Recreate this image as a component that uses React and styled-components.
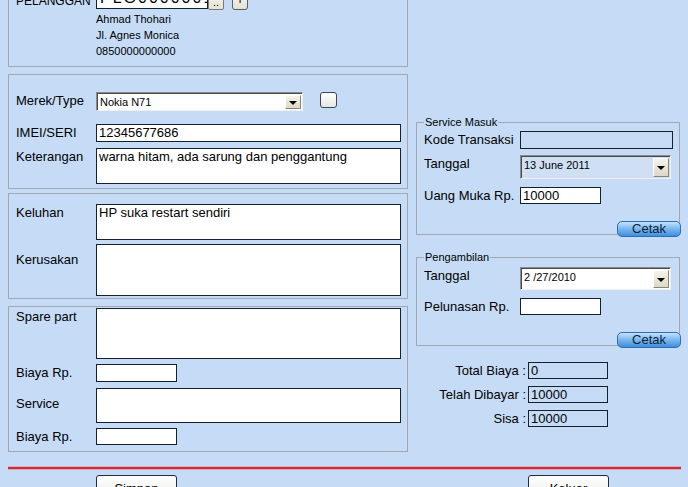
import styled, { createGlobalStyle } from "styled-components";

const GlobalStyle = createGlobalStyle`
  html, body {
    margin: 0;
    padding: 0;
    background: #c6dcf6;
    overflow: hidden;
  }
  body {
    font-family: "Liberation Sans", Arial, sans-serif;
    font-size: 13px;
    color: #000;
  }
  * {
    box-sizing: border-box;
  }
`;

export default function App() {
  return (
    <>
      <GlobalStyle />
      <Page>
        <Inner>
          <Columns>
            <LeftCol>
              <Panel $pt={8} $pb={7}>
                <Row>
                  <Label $drop={3} $small>PELANGGAN</Label>
                  <CodeBox>PLG0000001</CodeBox>
                  <DotsButton>..</DotsButton>
                  <PlusButton>+</PlusButton>
                </Row>
                <Info>
                  <div>Ahmad Thohari</div>
                  <div>Jl. Agnes Monica</div>
                  <div>0850000000000</div>
                </Info>
              </Panel>

              <Panel $mt={7} $pt={17} $pb={4}>
                <Row>
                  <Label>Merek/Type</Label>
                  <Combo $w={207} $h={19}>
                    <ComboText>Nokia N71</ComboText>
                    <ArrowButton>
                      <Arrow />
                    </ArrowButton>
                  </Combo>
                  <CheckButton />
                </Row>
                <Row $mt={13}>
                  <Label>IMEI/SERI</Label>
                  <Box $h={18}>12345677686</Box>
                </Row>
                <Row $mt={6}>
                  <Label>Keterangan</Label>
                  <Box $h={36}>warna hitam, ada sarung dan penggantung</Box>
                </Row>
              </Panel>

              <Panel $mt={4} $pt={10} $pb={2}>
                <Row>
                  <Label>Keluhan</Label>
                  <Box $h={36}>HP suka restart sendiri</Box>
                </Row>
                <Row $mt={4}>
                  <Label $drop={7}>Kerusakan</Label>
                  <Box $h={52} />
                </Row>
              </Panel>

              <Panel $mt={7} $pt={1} $pb={5}>
                <Row>
                  <Label>Spare part</Label>
                  <Box $h={51} />
                </Row>
                <Row $mt={5}>
                  <Label>Biaya Rp.</Label>
                  <Box $h={18} $w={81} />
                </Row>
                <Row $mt={6}>
                  <Label $drop={7}>Service</Label>
                  <Box $h={35} />
                </Row>
                <Row $mt={5}>
                  <Label>Biaya Rp.</Label>
                  <Box $h={17} $w={81} />
                </Row>
              </Panel>
            </LeftCol>

            <RightCol>
              <Group>
                <Legend>Service Masuk</Legend>
                <GroupBody $pt={2}>
                  <Row>
                    <Label $w={96}>Kode Transaksi</Label>
                    <Box $h={18} $w={153} $tinted />
                  </Row>
                  <Row $mt={6}>
                    <Label $w={96}>Tanggal</Label>
                    <Combo $w={151} $h={24} $tinted>
                      <ComboText>13 June 2011</ComboText>
                      <ArrowButton>
                        <Arrow />
                      </ArrowButton>
                    </Combo>
                  </Row>
                  <Row $mt={8}>
                    <Label $w={96}>Uang Muka Rp.</Label>
                    <Box $h={17} $w={81}>10000</Box>
                  </Row>
                  <BlueButton>Cetak</BlueButton>
                </GroupBody>
              </Group>

              <Group $mt={15}>
                <Legend>Pengambilan</Legend>
                <GroupBody $pt={3}>
                  <Row>
                    <Label $w={96}>Tanggal</Label>
                    <Combo $w={151} $h={23}>
                      <ComboText>2 /27/2010</ComboText>
                      <ArrowButton>
                        <Arrow />
                      </ArrowButton>
                    </Combo>
                  </Row>
                  <Row $mt={8}>
                    <Label $w={96}>Pelunasan Rp.</Label>
                    <Box $h={17} $w={81} />
                  </Row>
                  <BlueButton>Cetak</BlueButton>
                </GroupBody>
              </Group>

              <Totals>
                <TotalRow>
                  <TotalLabel>Total Biaya :</TotalLabel>
                  <Box $h={17} $w={80} $tinted>0</Box>
                </TotalRow>
                <TotalRow>
                  <TotalLabel>Telah Dibayar :</TotalLabel>
                  <Box $h={17} $w={80} $tinted>10000</Box>
                </TotalRow>
                <TotalRow>
                  <TotalLabel>Sisa :</TotalLabel>
                  <Box $h={17} $w={80} $tinted>10000</Box>
                </TotalRow>
              </Totals>
            </RightCol>
          </Columns>

          <Divider />

          <Footer>
            <FooterCell $pl={88}>
              <PlainButton>Simpan</PlainButton>
            </FooterCell>
            <FooterCell $pl={112}>
              <PlainButton>Keluar</PlainButton>
            </FooterCell>
          </Footer>
        </Inner>
      </Page>
    </>
  );
}

const Page = styled.div`
  width: 688px;
  height: 487px;
  overflow: hidden;
  padding-left: 8px;
`;
const Inner = styled.div`
  margin-top: -20px;
`;
const Columns = styled.div`
  display: grid;
  grid-template-columns: 400px 264px;
  column-gap: 8px;
  align-items: start;
`;
const LeftCol = styled.div`
  display: flex;
  flex-direction: column;
`;
const RightCol = styled.div`
  display: flex;
  flex-direction: column;
  padding-top: 135px;
`;
const Panel = styled.div`
  border: 1px solid #a3a7ad;
  margin-top: ${(p) => p.$mt || 0}px;
  padding: ${(p) => p.$pt}px 6px ${(p) => p.$pb}px 7px;
`;
const Row = styled.div`
  display: flex;
  align-items: flex-start;
  margin-top: ${(p) => p.$mt || 0}px;
`;
const Label = styled.div`
  flex: none;
  width: ${(p) => p.$w || 80}px;
  padding-top: ${(p) => p.$drop || 0}px;
  font-size: ${(p) => (p.$small ? "12px" : "13px")};
  line-height: 18px;
  white-space: nowrap;
`;
const Box = styled.div`
  flex: ${(p) => (p.$w ? "none" : "1")};
  width: ${(p) => (p.$w ? `${p.$w}px` : "auto")};
  height: ${(p) => p.$h}px;
  background: ${(p) => (p.$tinted ? "transparent" : "#fff")};
  border: 1px solid #14202c;
  padding: 0 2px;
  line-height: 16px;
  white-space: nowrap;
  overflow: hidden;
`;
const CodeBox = styled.div`
  width: 112px;
  height: 20px;
  background: #fff;
  border: 1px solid #14202c;
  padding: 0 3px;
  font-size: 16px;
  letter-spacing: 2px;
  line-height: 16px;
  white-space: nowrap;
  overflow: hidden;
`;
const DotsButton = styled.div`
  width: 16px;
  height: 21px;
  background: linear-gradient(#fbfbf8, #e4e1d4);
  border: 1px solid #7d7a6c;
  border-radius: 2px;
  font-size: 11px;
  line-height: 24px;
  text-align: center;
`;
const PlusButton = styled(DotsButton)`
  margin-left: 8px;
  border-radius: 3px;
  border-color: #5c5f66;
  font-size: 13px;
  line-height: 20px;
`;
const Info = styled.div`
  margin-top: 1px;
  padding-left: 80px;
  font-size: 11px;
  line-height: 16px;
`;
const Combo = styled.div`
  display: flex;
  width: ${(p) => p.$w}px;
  height: ${(p) => p.$h}px;
  flex: none;
  background: ${(p) => (p.$tinted ? "#cfe0f5" : "#fff")};
  border: 1px solid;
  border-color: #8b8b8b #f0f0f0 #f0f0f0 #8b8b8b;
  box-shadow: inset 1px 1px 0 #4a4a4a;
  padding: 2px 1px 1px 2px;
`;
const ComboText = styled.div`
  flex: 1;
  padding-left: 1px;
  font-size: 11px;
  line-height: 14px;
  white-space: nowrap;
`;
const ArrowButton = styled.div`
  width: 16px;
  display: flex;
  align-items: center;
  justify-content: center;
  background: linear-gradient(#f6f4ea, #ddd8c6);
  border: 1px solid;
  border-color: #fff #8a8676 #8a8676 #fff;
`;
const Arrow = styled.span`
  width: 0;
  height: 0;
  border-left: 4px solid transparent;
  border-right: 4px solid transparent;
  border-top: 4px solid #000;
  margin-top: 1px;
`;
const CheckButton = styled.div`
  width: 17px;
  height: 16px;
  margin-left: 17px;
  border: 1px solid #3f4650;
  border-radius: 3px;
  background: linear-gradient(#ffffff, #e6e6e2);
`;
const Group = styled.fieldset`
  margin: ${(p) => p.$mt || 0}px 0 0;
  padding: 0 6px 0 7px;
  border: 1px solid #a3a7ad;
  min-width: 0;
`;
const Legend = styled.legend`
  padding: 0 1px;
  margin-left: 0;
  font-size: 11px;
  line-height: 14px;
`;
const GroupBody = styled.div`
  display: flex;
  flex-direction: column;
  padding-top: ${(p) => p.$pt}px;
`;
const BlueButton = styled.div`
  align-self: flex-end;
  width: 64px;
  height: 16px;
  margin: 16px -8px -3px 0;
  border: 1px solid #2f6db5;
  border-radius: 5px;
  background: linear-gradient(#c4e2fc, #7fbaf0 45%, #3f8fdc);
  font-size: 13px;
  line-height: 14px;
  text-align: center;
  color: #0f1e33;
`;
const Totals = styled.div`
  display: flex;
  flex-direction: column;
  gap: 7px;
  margin-top: 16px;
`;
const TotalRow = styled.div`
  display: flex;
  align-items: center;
`;
const TotalLabel = styled.div`
  width: 112px;
  padding-right: 2px;
  text-align: right;
  white-space: nowrap;
`;
const Divider = styled.div`
  width: 673px;
  height: 2px;
  margin-top: 15px;
  background: #c52f42;
  box-shadow: 0 1px 0 #e8a2b0, 0 -1px 0 #e2aabb;
`;
const Footer = styled.div`
  display: grid;
  grid-template-columns: 400px 264px;
  column-gap: 8px;
  margin-top: 6px;
`;
const FooterCell = styled.div`
  padding-left: ${(p) => p.$pl}px;
`;
const PlainButton = styled.div`
  width: 81px;
  height: 24px;
  border: 1px solid #1c2c4c;
  border-radius: 3px;
  background: linear-gradient(#ffffff, #ecebe6);
  text-align: center;
  line-height: 18px;
  padding-top: 4px;
`;
